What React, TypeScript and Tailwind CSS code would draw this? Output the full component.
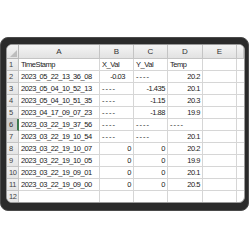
import React from 'react';

type Cell = string;

const rows: Cell[][] = [
  ['TimeStamp', 'X_Val', 'Y_Val', 'Temp'],
  ['2023_05_22_13_36_08', '-0.03', '----', '20.2'],
  ['2023_05_04_10_52_13', '----', '-1.435', '20.1'],
  ['2023_05_04_10_51_35', '----', '-1.15', '20.3'],
  ['2023_04_17_09_07_23', '----', '-1.88', '19.9'],
  ['2023_03_22_19_37_56', '----', '----', '----'],
  ['2023_03_22_19_10_54', '----', '----', '20.1'],
  ['2023_03_22_19_10_07', '0', '0', '20.2'],
  ['2023_03_22_19_10_05', '0', '0', '19.9'],
  ['2023_03_22_19_09_01', '0', '0', '20.1'],
  ['2023_03_22_19_09_00', '0', '0', '20.5'],
  ['', '', '', ''],
];

const cols = ['A', 'B', 'C', 'D', 'E', ''];

// numbers sit on the right, text on the left
const isNum = (v: string) => /^-?\d+(\.\d+)?$/.test(v);

export default function App() {
  return (
    <div className="w-[250px] h-[250px] bg-white pt-[37px] overflow-hidden font-['Liberation_Sans',sans-serif]">
      {/* tablet frame */}
      <div className="w-[249px] h-[174px] rounded-[8px] bg-[#2b2b2b] border border-[#4a4a4a] pt-[6px] pl-[5px] pr-[3px]">
        <div className="h-[159px] rounded-[6px] overflow-hidden bg-white border border-[#9a9a9a]">
          <div className="grid grid-cols-[12px_81px_34px_34px_35px_34px_1fr] grid-rows-[14px_repeat(12,12px)] text-[7.5px] tracking-[-0.45px] leading-none text-[#1a1a1a]">
            {/* corner */}
            <div className="relative bg-gradient-to-b from-[#f4f4f4] to-[#e2e2e2] border-r border-b border-[#b8b8b8]">
              <div className="absolute right-[1px] bottom-[1px] w-0 h-0 border-l-[7px] border-l-transparent border-b-[7px] border-b-[#bdbdbd]" />
            </div>
            {cols.map((c, i) => (
              <div
                key={i}
                className="flex items-center justify-center bg-gradient-to-b from-[#f4f4f4] to-[#e2e2e2] border-r border-b border-[#c4c4c4] text-[#333] text-[8px] tracking-normal"
              >
                {c}
              </div>
            ))}

            {rows.map((r, ri) => {
              const selected = ri === 5;
              return (
                <React.Fragment key={ri}>
                  <div
                    className={
                      selected
                        ? 'flex items-center pl-[2px] bg-[#cfcfcf] border-b border-[#b8b8b8] border-r-2 border-r-[#3e7a4e] text-[#333]'
                        : 'flex items-center pl-[2px] bg-gradient-to-b from-[#f1f1f1] to-[#e4e4e4] border-r border-b border-[#c4c4c4] text-[#444]'
                    }
                  >
                    {ri + 1}
                  </div>
                  {r.map((v, ci) => (
                    <div
                      key={ci}
                      className={
                        'flex items-center border-r border-b border-[#d6d6d6] whitespace-nowrap overflow-hidden ' +
                        (isNum(v) ? 'justify-end pr-[2px]' : 'justify-start pl-[2px]') +
                        (v === '----' ? ' tracking-[1px]' : '') +
                        (ri === 1 && ci === 1 ? ' pr-[8px]' : '')
                      }
                    >
                      {v}
                    </div>
                  ))}
                  <div className="border-r border-b border-[#d6d6d6]" />
                  <div className="border-b border-[#d6d6d6]" />
                </React.Fragment>
              );
            })}
          </div>
        </div>
      </div>
    </div>
  );
}
